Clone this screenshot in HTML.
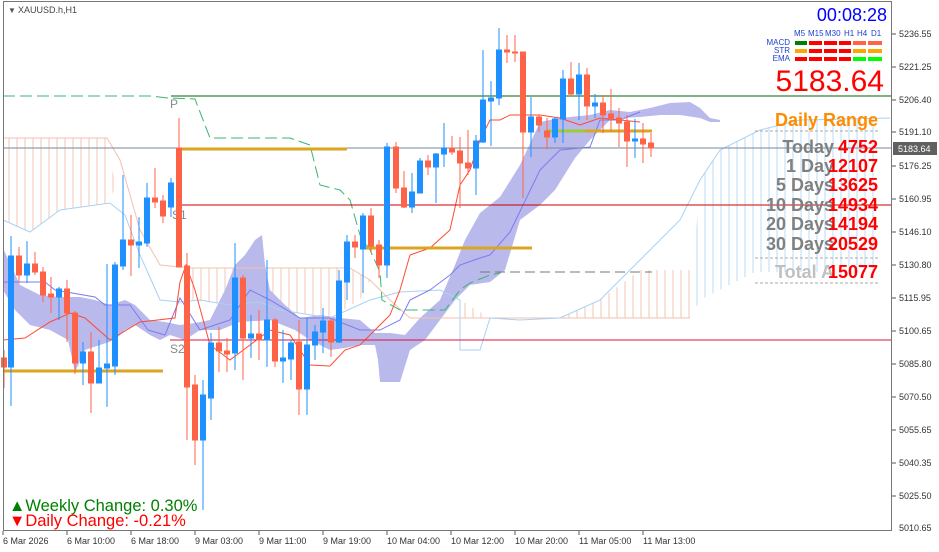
<!DOCTYPE html>
<html><head><meta charset="utf-8"><style>
html,body{margin:0;padding:0;background:#fff;}
svg{display:block;font-family:"Liberation Sans",sans-serif;}
</style></head><body>
<svg width="939" height="552" viewBox="0 0 939 552" xmlns="http://www.w3.org/2000/svg">
<defs>
<pattern id="hp" width="8" height="10" patternUnits="userSpaceOnUse"><line x1="1" y1="0" x2="1" y2="10" stroke="#f2c5b3" stroke-width="1"/></pattern>
<pattern id="hb" width="8" height="10" patternUnits="userSpaceOnUse"><line x1="1" y1="0" x2="1" y2="10" stroke="#b8dcf7" stroke-width="1"/></pattern>
</defs>
<rect width="939" height="552" fill="#fff"/>
<polygon points="3,138 107,138 115,185 110,203 60,210 30,232 3,220" fill="url(#hp)"/>
<polygon points="190,268 350,268 370,280 360,300 330,318 280,310 230,305 190,300" fill="url(#hp)"/>
<polygon points="460,300 490,318 560,318 600,300 640,270 690,270 690,318 460,318" fill="url(#hp)"/>
<polygon points="700,180 720,150 760,130 800,120 880,118 880,272 755,272 700,300 690,318" fill="url(#hb)"/>
<polygon fill="#b9b9ec" points="3,248 20,285 40,295 60,297 80,297 95,300 110,305 125,300 135,305 150,320 165,322 180,325 195,323 210,320 225,290 235,265 245,255 255,240 262,235 265,265 270,290 285,305 300,318 320,315 340,318 360,320 375,333 390,333 405,335 420,318 440,300 455,265 465,240 480,213 500,197 520,165 540,122 560,118 590,115 610,110 630,112 650,108 670,103 690,102 700,108 710,118 720,120 720,122 710,122 700,118 680,115 660,115 640,117 620,118 610,120 590,140 575,158 555,190 540,205 520,220 505,270 490,282 470,285 455,300 440,320 425,340 410,350 400,382 380,382 378,360 375,345 360,345 345,348 330,350 310,340 295,330 270,320 240,322 220,330 200,330 185,340 170,335 160,340 150,335 135,325 125,330 115,340 100,345 85,350 75,372 68,340 50,330 30,325 15,310 3,290"/>
<polyline fill="none" stroke="#f2c2ae" stroke-width="1" points="3,138 107,138 120,160 140,230 160,265 190,268 350,268 370,280 390,300 410,318 690,318"/>
<polyline fill="none" stroke="#a8d2f5" stroke-width="1" points="3,220 30,232 60,210 110,203 125,215 140,255 160,300 180,302 200,300 230,305 260,302 280,310 330,318 370,300 400,292 440,290 460,300 460,350 480,350 490,318 520,320 560,318 600,300 640,260 680,220 700,180 720,150 760,130 800,120 890,118"/>
<polyline fill="none" stroke="#7b7bf0" stroke-width="1" points="3,282 45,282 55,290 95,297 105,305 130,305 148,330 165,335 180,298 200,330 230,320 250,290 270,300 300,318 330,318 360,330 380,330 400,320 410,300 430,290 450,275 460,265 480,258 490,255 510,232 540,170 560,150 590,147 600,120 620,120 640,112"/>
<polyline fill="none" stroke="#ff4a30" stroke-width="1" points="3,340 25,338 50,322 70,313 85,318 110,340 140,322 175,318 180,282 186,265 195,290 210,345 230,360 250,345 270,330 290,335 310,365 330,366 345,350 360,345 375,330 390,315 400,290 410,255 430,248 450,230 460,185 470,170 480,140 490,120 500,120 510,115 520,115 540,115 560,118 580,125 600,118 620,120 640,122"/>
<polyline fill="none" stroke="#3cb371" stroke-width="1" stroke-dasharray="12,5" points="3,96 150,96 168,98 195,99 210,138 290,138 310,145 320,185 340,190 350,200 360,235 370,250 380,272 382,300 400,310 445,310 460,290 470,283 490,275 500,273"/>
<line x1="171" y1="96" x2="892" y2="96" stroke="#006400" stroke-width="1"/>
<line x1="3" y1="148" x2="892" y2="148" stroke="#778899" stroke-width="1"/>
<line x1="180" y1="205" x2="892" y2="205" stroke="#cc0000" stroke-width="1"/>
<line x1="170" y1="340" x2="892" y2="340" stroke="#dc143c" stroke-width="1"/>
<line x1="480" y1="272" x2="652" y2="272" stroke="#777" stroke-width="1" stroke-dasharray="10,5"/>
<g stroke="#daa520" stroke-width="3">
<line x1="180" y1="149" x2="347" y2="149"/>
<line x1="3" y1="371" x2="163" y2="371"/>
<line x1="365" y1="248" x2="532" y2="248"/>
<line x1="585" y1="131" x2="652" y2="131"/>
</g>
<line x1="547" y1="131" x2="585" y2="131" stroke="#9acd32" stroke-width="3"/>
<g font-size="12" fill="#888"><text x="170" y="108">P</text><text x="172" y="219">S1</text><text x="170" y="353">S2</text></g>
<g stroke-width="1">
<g stroke="#ff6347" fill="#ff6347">
<line x1="4" y1="350" x2="4" y2="388"/><rect x="1.5" y="358" width="5" height="9"/>
<line x1="19" y1="247" x2="19" y2="283"/><rect x="16.5" y="256" width="5" height="19"/>
<line x1="35" y1="252" x2="35" y2="275"/><rect x="32.5" y="264" width="5" height="8"/>
<line x1="43" y1="267" x2="43" y2="302"/><rect x="40.5" y="272" width="5" height="23"/>
<line x1="51" y1="277" x2="51" y2="313"/><rect x="48.5" y="294" width="5" height="3"/>
<line x1="67" y1="280" x2="67" y2="342"/><rect x="64.5" y="289" width="5" height="24"/>
<line x1="75" y1="311" x2="75" y2="374"/><rect x="72.5" y="313" width="5" height="50"/>
<line x1="91" y1="332" x2="91" y2="413"/><rect x="88.5" y="352" width="5" height="31"/>
<line x1="131" y1="215" x2="131" y2="276"/><rect x="128.5" y="240" width="5" height="5"/>
<line x1="155" y1="168" x2="155" y2="208"/><rect x="152.5" y="198" width="5" height="4"/>
<line x1="163" y1="195" x2="163" y2="223"/><rect x="160.5" y="201" width="5" height="15"/>
<line x1="179" y1="118" x2="179" y2="267"/><rect x="176.5" y="148" width="5" height="119"/>
<line x1="187" y1="253" x2="187" y2="440"/><rect x="184.5" y="266" width="5" height="121"/>
<line x1="195" y1="375" x2="195" y2="465"/><rect x="192.5" y="385" width="5" height="55"/>
<line x1="219" y1="327" x2="219" y2="372"/><rect x="216.5" y="343" width="5" height="8"/>
<line x1="227" y1="338" x2="227" y2="372"/><rect x="224.5" y="351" width="5" height="3"/>
<line x1="243" y1="275" x2="243" y2="380"/><rect x="240.5" y="278" width="5" height="60"/>
<line x1="259" y1="310" x2="259" y2="360"/><rect x="256.5" y="334" width="5" height="6"/>
<line x1="275" y1="318" x2="275" y2="367"/><rect x="272.5" y="320" width="5" height="41"/>
<line x1="299" y1="320" x2="299" y2="415"/><rect x="296.5" y="342" width="5" height="47"/>
<line x1="331" y1="318" x2="331" y2="357"/><rect x="328.5" y="321" width="5" height="21"/>
<line x1="355" y1="235" x2="355" y2="258"/><rect x="352.5" y="242" width="5" height="5"/>
<line x1="371" y1="208" x2="371" y2="253"/><rect x="368.5" y="216" width="5" height="30"/>
<line x1="379" y1="240" x2="379" y2="278"/><rect x="376.5" y="245" width="5" height="20"/>
<line x1="396" y1="142" x2="396" y2="193"/><rect x="393.5" y="147" width="5" height="41"/>
<line x1="404" y1="171" x2="404" y2="208"/><rect x="401.5" y="188" width="5" height="19"/>
<line x1="428" y1="155" x2="428" y2="175"/><rect x="425.5" y="161" width="5" height="6"/>
<line x1="452" y1="136" x2="452" y2="155"/><rect x="449.5" y="148" width="5" height="4"/>
<line x1="460" y1="137" x2="460" y2="208"/><rect x="457.5" y="151" width="5" height="12"/>
<line x1="468" y1="130" x2="468" y2="175"/><rect x="465.5" y="163" width="5" height="5"/>
<line x1="507" y1="35" x2="507" y2="63"/><rect x="504.5" y="50" width="5" height="2"/>
<line x1="515" y1="35" x2="515" y2="62"/><rect x="512.5" y="52" width="5" height="1"/>
<line x1="523" y1="52" x2="523" y2="198"/><rect x="520.5" y="52" width="5" height="80"/>
<line x1="539" y1="115" x2="539" y2="132"/><rect x="536.5" y="117" width="5" height="8"/>
<line x1="547" y1="118" x2="547" y2="149"/><rect x="544.5" y="131" width="5" height="6"/>
<line x1="571" y1="62" x2="571" y2="95"/><rect x="568.5" y="79" width="5" height="15"/>
<line x1="587" y1="68" x2="587" y2="120"/><rect x="584.5" y="75" width="5" height="31"/>
<line x1="603" y1="95" x2="603" y2="133"/><rect x="600.5" y="103" width="5" height="12"/>
<line x1="611" y1="89" x2="611" y2="132"/><rect x="608.5" y="114" width="5" height="5"/>
<line x1="619" y1="108" x2="619" y2="147"/><rect x="616.5" y="118" width="5" height="5"/>
<line x1="627" y1="115" x2="627" y2="167"/><rect x="624.5" y="122" width="5" height="19"/>
<line x1="643" y1="123" x2="643" y2="163"/><rect x="640.5" y="139" width="5" height="5"/>
<line x1="651" y1="133" x2="651" y2="157"/><rect x="648.5" y="143" width="5" height="5"/>
</g>
<g stroke="#1e90ff" fill="#1e90ff">
<line x1="11" y1="236" x2="11" y2="406"/><rect x="8.5" y="256" width="5" height="111"/>
<line x1="27" y1="241" x2="27" y2="283"/><rect x="24.5" y="264" width="5" height="11"/>
<line x1="59" y1="287" x2="59" y2="320"/><rect x="56.5" y="289" width="5" height="8"/>
<line x1="83" y1="342" x2="83" y2="385"/><rect x="80.5" y="352" width="5" height="11"/>
<line x1="99" y1="340" x2="99" y2="383"/><rect x="96.5" y="368" width="5" height="15"/>
<line x1="107" y1="264" x2="107" y2="407"/><rect x="104.5" y="364" width="5" height="4"/>
<line x1="115" y1="262" x2="115" y2="375"/><rect x="112.5" y="265" width="5" height="101"/>
<line x1="123" y1="175" x2="123" y2="270"/><rect x="120.5" y="240" width="5" height="26"/>
<line x1="139" y1="217" x2="139" y2="268"/><rect x="136.5" y="242" width="5" height="3"/>
<line x1="147" y1="183" x2="147" y2="247"/><rect x="144.5" y="198" width="5" height="45"/>
<line x1="171" y1="178" x2="171" y2="217"/><rect x="168.5" y="183" width="5" height="24"/>
<line x1="203" y1="380" x2="203" y2="510"/><rect x="200.5" y="395" width="5" height="45"/>
<line x1="211" y1="333" x2="211" y2="420"/><rect x="208.5" y="343" width="5" height="55"/>
<line x1="235" y1="243" x2="235" y2="370"/><rect x="232.5" y="278" width="5" height="75"/>
<line x1="251" y1="315" x2="251" y2="358"/><rect x="248.5" y="334" width="5" height="4"/>
<line x1="267" y1="260" x2="267" y2="367"/><rect x="264.5" y="320" width="5" height="20"/>
<line x1="283" y1="330" x2="283" y2="383"/><rect x="280.5" y="358" width="5" height="3"/>
<line x1="291" y1="340" x2="291" y2="380"/><rect x="288.5" y="343" width="5" height="16"/>
<line x1="307" y1="318" x2="307" y2="415"/><rect x="304.5" y="345" width="5" height="44"/>
<line x1="315" y1="325" x2="315" y2="360"/><rect x="312.5" y="332" width="5" height="13"/>
<line x1="323" y1="308" x2="323" y2="353"/><rect x="320.5" y="321" width="5" height="11"/>
<line x1="339" y1="270" x2="339" y2="343"/><rect x="336.5" y="281" width="5" height="61"/>
<line x1="347" y1="235" x2="347" y2="300"/><rect x="344.5" y="242" width="5" height="40"/>
<line x1="363" y1="213" x2="363" y2="293"/><rect x="360.5" y="216" width="5" height="33"/>
<line x1="387" y1="143" x2="387" y2="278"/><rect x="384.5" y="147" width="5" height="118"/>
<line x1="412" y1="173" x2="412" y2="213"/><rect x="409.5" y="192" width="5" height="15"/>
<line x1="420" y1="158" x2="420" y2="193"/><rect x="417.5" y="161" width="5" height="32"/>
<line x1="436" y1="153" x2="436" y2="203"/><rect x="433.5" y="154" width="5" height="13"/>
<line x1="444" y1="123" x2="444" y2="167"/><rect x="441.5" y="148" width="5" height="6"/>
<line x1="476" y1="135" x2="476" y2="195"/><rect x="473.5" y="141" width="5" height="27"/>
<line x1="483" y1="50" x2="483" y2="143"/><rect x="480.5" y="100" width="5" height="42"/>
<line x1="491" y1="81" x2="491" y2="146"/><rect x="488.5" y="98" width="5" height="3"/>
<line x1="499" y1="28" x2="499" y2="105"/><rect x="496.5" y="50" width="5" height="48"/>
<line x1="531" y1="97" x2="531" y2="157"/><rect x="528.5" y="117" width="5" height="15"/>
<line x1="555" y1="117" x2="555" y2="143"/><rect x="552.5" y="119" width="5" height="18"/>
<line x1="563" y1="70" x2="563" y2="143"/><rect x="560.5" y="79" width="5" height="40"/>
<line x1="579" y1="63" x2="579" y2="120"/><rect x="576.5" y="75" width="5" height="19"/>
<line x1="595" y1="94" x2="595" y2="118"/><rect x="592.5" y="103" width="5" height="3"/>
<line x1="635" y1="119" x2="635" y2="158"/><rect x="632.5" y="139" width="5" height="2"/>
</g>
</g>
<rect x="3.5" y="1.5" width="888" height="529" fill="none" stroke="#777" stroke-width="1"/>
<line x1="891.5" y1="1" x2="891.5" y2="531" stroke="#777"/>
<text x="8" y="13" font-size="8" fill="#555">▼</text><text x="18" y="13" font-size="9" fill="#444">XAUUSD.h,H1</text>
<g font-size="9" fill="#333">
<text x="899" y="37">5236.55</text><text x="899" y="70">5221.25</text><text x="899" y="103">5206.40</text><text x="899" y="135">5191.10</text><text x="899" y="169">5176.25</text><text x="899" y="202">5160.95</text><text x="899" y="235">5146.10</text><text x="899" y="268">5130.80</text><text x="899" y="301">5115.95</text><text x="899" y="334">5100.65</text><text x="899" y="367">5085.80</text><text x="899" y="400">5070.50</text><text x="899" y="433">5055.65</text><text x="899" y="466">5040.35</text><text x="899" y="499">5025.50</text><text x="899" y="531">5010.65</text>
</g>
<g stroke="#555"><line x1="892" y1="34" x2="896" y2="34"/><line x1="892" y1="67" x2="896" y2="67"/><line x1="892" y1="100" x2="896" y2="100"/><line x1="892" y1="132" x2="896" y2="132"/><line x1="892" y1="166" x2="896" y2="166"/><line x1="892" y1="199" x2="896" y2="199"/><line x1="892" y1="232" x2="896" y2="232"/><line x1="892" y1="265" x2="896" y2="265"/><line x1="892" y1="298" x2="896" y2="298"/><line x1="892" y1="331" x2="896" y2="331"/><line x1="892" y1="364" x2="896" y2="364"/><line x1="892" y1="397" x2="896" y2="397"/><line x1="892" y1="430" x2="896" y2="430"/><line x1="892" y1="463" x2="896" y2="463"/><line x1="892" y1="496" x2="896" y2="496"/></g>
<rect x="893" y="142" width="44" height="13" fill="#606060"/>
<text x="898" y="152" font-size="9" fill="#fff">5183.64</text>
<g stroke="#555"><line x1="3" y1="531" x2="3" y2="535"/><line x1="67" y1="531" x2="67" y2="535"/><line x1="131" y1="531" x2="131" y2="535"/><line x1="195" y1="531" x2="195" y2="535"/><line x1="259" y1="531" x2="259" y2="535"/><line x1="323" y1="531" x2="323" y2="535"/><line x1="387" y1="531" x2="387" y2="535"/><line x1="451" y1="531" x2="451" y2="535"/><line x1="515" y1="531" x2="515" y2="535"/><line x1="579" y1="531" x2="579" y2="535"/><line x1="643" y1="531" x2="643" y2="535"/></g>
<g font-size="9" fill="#333">
<text x="3" y="544">6 Mar 2026</text><text x="67" y="544">6 Mar 10:00</text><text x="131" y="544">6 Mar 18:00</text><text x="195" y="544">9 Mar 03:00</text><text x="259" y="544">9 Mar 11:00</text><text x="323" y="544">9 Mar 19:00</text><text x="387" y="544">10 Mar 04:00</text><text x="451" y="544">10 Mar 12:00</text><text x="515" y="544">10 Mar 20:00</text><text x="579" y="544">11 Mar 05:00</text><text x="643" y="544">11 Mar 13:00</text>
</g>
<text x="9" y="511" font-size="16.5" fill="#008000">▲Weekly Change: 0.30%</text>
<text x="9" y="526" font-size="16.5" fill="#ff0000">▼Daily Change: -0.21%</text>
<text x="887" y="21" font-size="18" fill="#0000ff" text-anchor="end">00:08:28</text>
<g font-size="8" fill="#1c3fd0"><text x="794" y="36">M5</text><text x="808" y="36">M15</text><text x="825" y="36">M30</text><text x="844" y="36">H1</text><text x="857" y="36">H4</text><text x="871" y="36">D1</text></g>
<g font-size="8" fill="#1c3fd0" text-anchor="end"><text x="790" y="45">MACD</text><text x="790" y="53">STR</text><text x="790" y="61">EMA</text></g>
<g>
<rect x="795" y="41" width="12" height="4" fill="#008000"/><rect x="809" y="41" width="13" height="4" fill="#ff0000"/><rect x="824" y="41" width="13" height="4" fill="#ff0000"/><rect x="839" y="41" width="12" height="4" fill="#ff0000"/><rect x="853" y="41" width="13" height="4" fill="#ff6347"/><rect x="868" y="41" width="14" height="4" fill="#ff6347"/>
<rect x="795" y="49" width="12" height="4" fill="#ffa500"/><rect x="809" y="49" width="13" height="4" fill="#ff0000"/><rect x="824" y="49" width="13" height="4" fill="#ff0000"/><rect x="839" y="49" width="12" height="4" fill="#ff0000"/><rect x="853" y="49" width="13" height="4" fill="#ffa500"/><rect x="868" y="49" width="14" height="4" fill="#ffa500"/>
<rect x="795" y="57" width="12" height="4" fill="#ff0000"/><rect x="809" y="57" width="13" height="4" fill="#ff0000"/><rect x="824" y="57" width="13" height="4" fill="#ff0000"/><rect x="839" y="57" width="12" height="4" fill="#ff0000"/><rect x="853" y="57" width="13" height="4" fill="#00ff00"/><rect x="868" y="57" width="14" height="4" fill="#00ff00"/>
</g>
<text x="884" y="91" font-size="30" fill="#ff0000" text-anchor="end">5183.64</text>
<text x="878" y="126" font-size="18" font-weight="bold" fill="#ff8c00" text-anchor="end">Daily Range</text>
<g stroke="#aaa" stroke-dasharray="3,2"><line x1="755" y1="131" x2="878" y2="131"/><line x1="755" y1="258" x2="878" y2="258"/><line x1="755" y1="283" x2="878" y2="283"/></g>
<g font-size="18" font-weight="bold" fill="#808080" text-anchor="end">
<text x="834" y="153">Today</text><text x="834" y="172">1 Day</text><text x="834" y="191">5 Days</text><text x="834" y="211">10 Days</text><text x="834" y="230">20 Days</text><text x="834" y="250">30 Days</text><text x="834" y="278" fill="#c0c0c0">Total A</text>
</g>
<g font-size="18" font-weight="bold" fill="#ff0000" text-anchor="end">
<text x="878" y="153">4752</text><text x="878" y="172">12107</text><text x="878" y="191">13625</text><text x="878" y="211">14934</text><text x="878" y="230">14194</text><text x="878" y="250">20529</text><text x="878" y="278">15077</text>
</g>
</svg>
</body></html>
